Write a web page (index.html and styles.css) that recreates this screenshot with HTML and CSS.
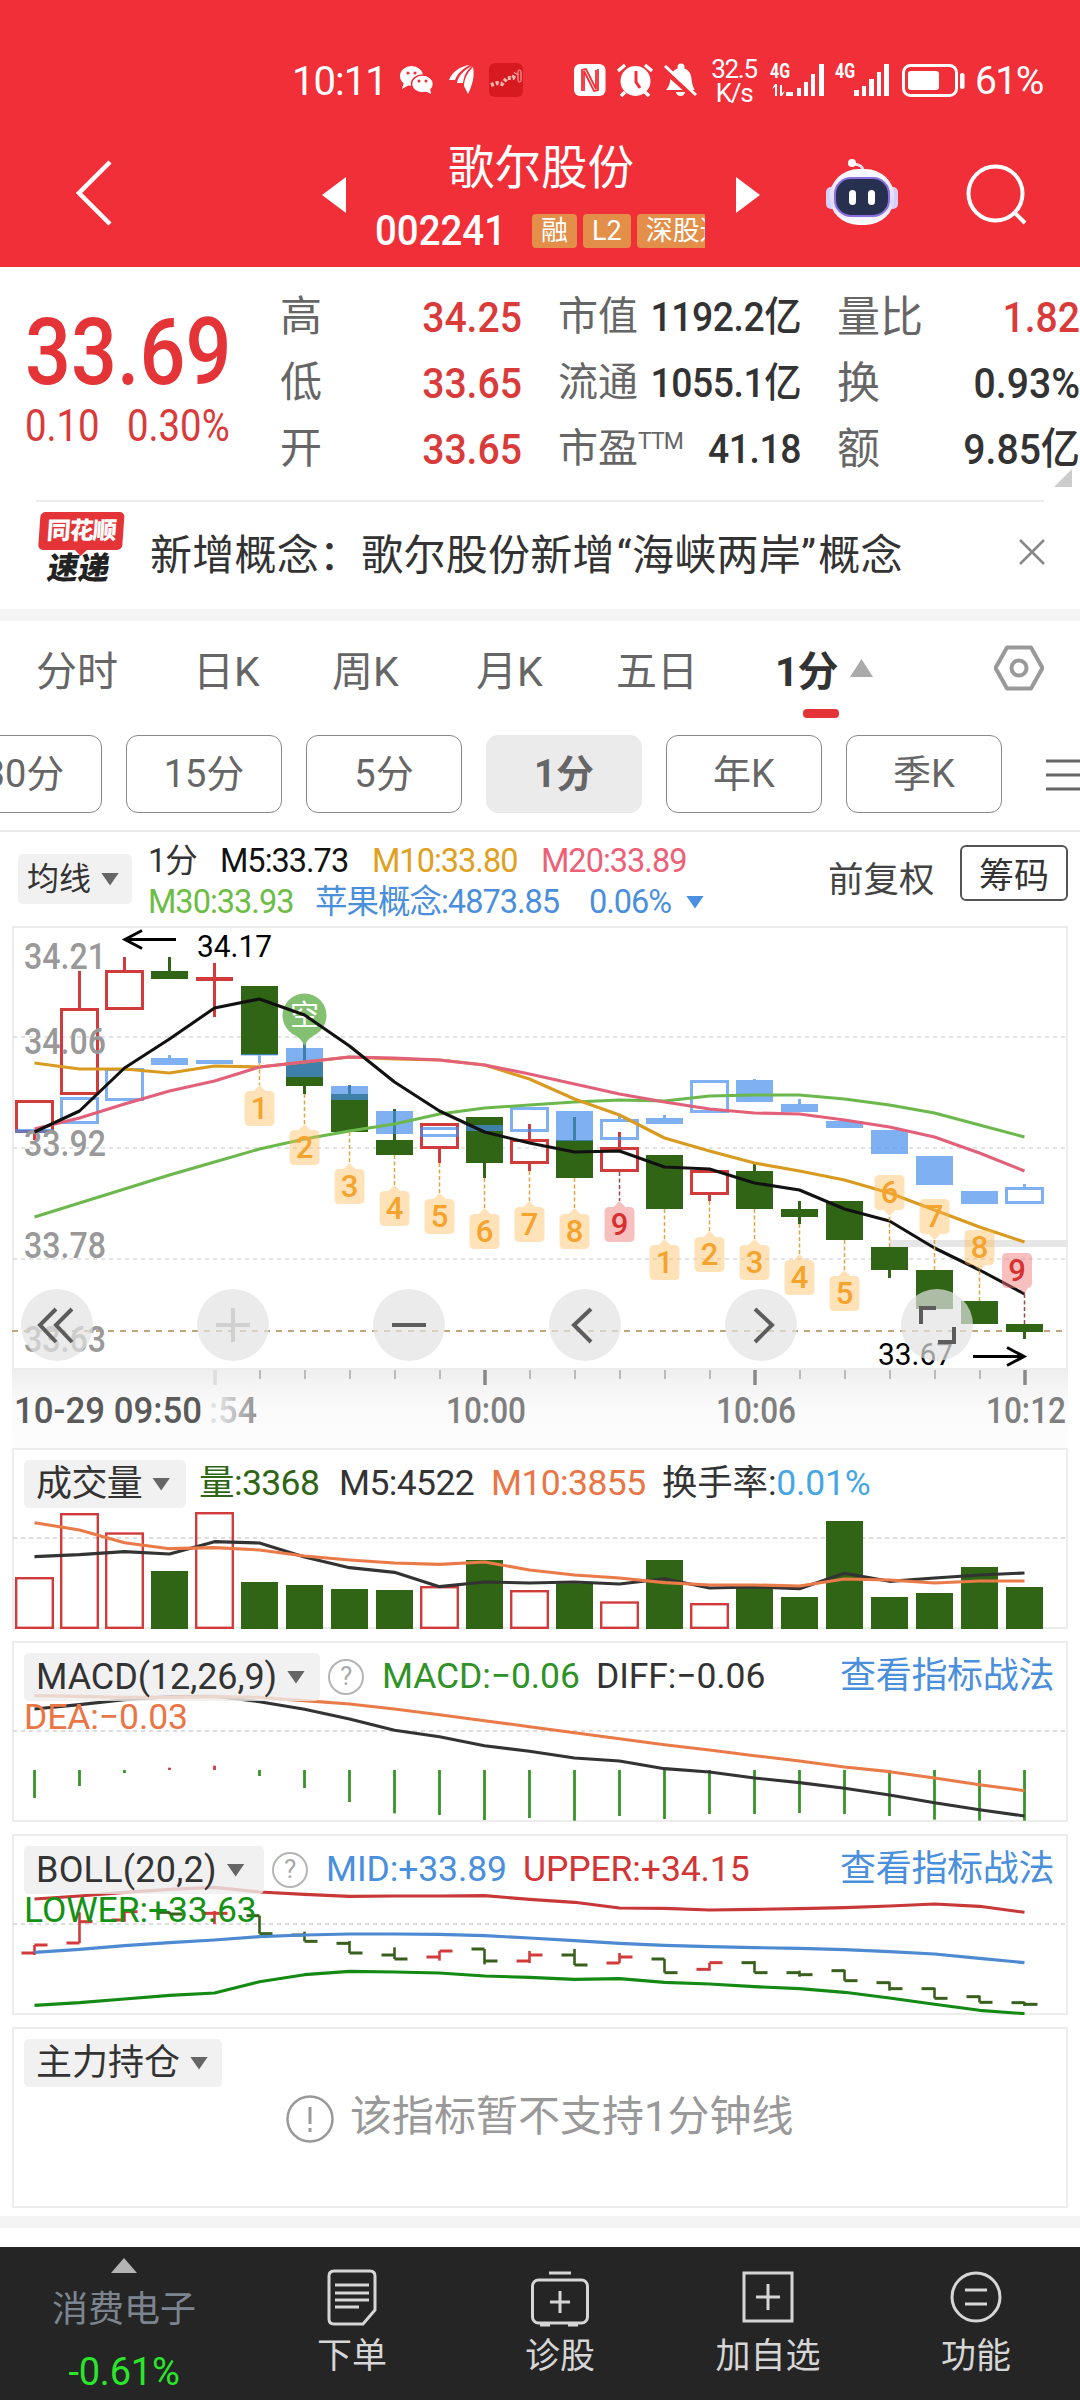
FILE: index.html
```html
<!DOCTYPE html>
<html lang="zh-CN">
<head>
<meta charset="utf-8">
<title>歌尔股份 002241</title>
<link rel="stylesheet" href="styles.css">
</head>
<body>
<header class="top">
  <div class="status">
    <span class="clock">10:11</span>
    <svg class="apps" width="150" height="50" viewBox="385 55 150 50">
      <g fill="#fff"><ellipse cx="411.500" cy="76" rx="11.500" ry="10"/><path d="M404 82l-2 7 7-4z"/>
      <ellipse cx="422.500" cy="84" rx="11" ry="9" stroke="#f12f38" stroke-width="1.500"/><path d="M425 91l6 3-1-6z"/></g>
      <g fill="#f12f38"><circle cx="408" cy="73" r="1.600"/><circle cx="415" cy="73" r="1.600"/><circle cx="419" cy="81" r="1.500"/><circle cx="426" cy="81" r="1.500"/></g>
      <path fill="#fff" d="M449 80c3-8 11-14 21-15-8 4-12 8-15 15zM457 83c1-7 7-13 15-17-6 5-8 10-9 17zM464 86c0-7 4-14 9-19 2 9-1 19-5 27z"/>
      <rect x="489" y="63" width="34" height="34" rx="6" fill="#d71920"/>
      <path d="M491 85l6-2 5 1 5-6 6 0 3-5" fill="none" stroke="#ffb9b0" stroke-width="4" stroke-dasharray="3 2"/><rect x="518" y="70" width="3" height="12" rx="1.500" fill="none" stroke="#ffb9b0"/>
    </svg>
    <svg class="sys" width="132" height="50" viewBox="570 55 132 50">
      <rect x="574" y="64" width="31.500" height="32" rx="6" fill="#fff"/>
      <path d="M582 91V70l4-1 10 20V70M598 69v21l-4 1-10-20v20" fill="none" stroke="#f12f38" stroke-width="1.800"/>
      <circle cx="635.500" cy="81" r="15" fill="#fff"/><path d="M618 71l7-6M652 71l-7-6M625 92l-4 4M645 92l4 4" stroke="#fff" stroke-width="3.500"/>
      <path d="M636 71v11l4 6" fill="none" stroke="#f12f38" stroke-width="3"/>
      <path d="M666 90c4-4 4-9 5-14 1-5 5-8 10-8s9 3 10 8c1 5 1 10 4 14zM676 92h9a4.500 4 0 0 1-9 0z" fill="#fff"/><circle cx="681" cy="67" r="3.500" fill="#fff"/>
      <path d="M664 70l31 28" stroke="#f12f38" stroke-width="5"/><path d="M665 66l31 29" stroke="#fff" stroke-width="3"/>
    </svg>
    <span class="speed">32.5<br>K/s</span>
    <svg class="signal" width="200" height="50" viewBox="768 55 200 50">
      <g fill="#fff">
        <path d="M790 92h3v4h-3zM797 88h4v8h-4zM804 82h4v14h-4zM811 74h4v22h-4zM819 64h5v32h-5z"/>
        <path d="M854 90h5v6h-5zM862 86h4v10h-4zM869 79h5v17h-5zM877 72h4v24h-4zM884 64h5v32h-5z"/>
        <path d="M775 96v-9l-3 2 3-5h2v12zM780 85v11h2l3-5-3 2V85zM786 92h4v4h-4z"/>
        <rect x="908" y="71" width="31" height="19" rx="3"/><rect x="960" y="73" width="4.500" height="16" rx="2"/>
      </g>
      <rect x="903.500" y="65.500" width="53" height="30" rx="7" fill="none" stroke="#fff" stroke-width="3"/>
      <g class="g4"><text x="770" y="78" textLength="20" lengthAdjust="spacingAndGlyphs">4G</text><text x="835" y="78" textLength="20" lengthAdjust="spacingAndGlyphs">4G</text></g>
    </svg>
    <span class="battery">61%</span>
  </div>
  <div class="nav">
    <svg class="back" width="40" height="70" viewBox="0 0 40 70"><path d="M36 4L5 35l31 31" fill="none" stroke="#fff" stroke-width="4.500"/></svg>
    <svg class="prev" width="24" height="36" viewBox="0 0 24 36"><path d="M24 0v36L0 18z" fill="#fff"/></svg>
    <div class="stock">
      <h1>歌尔股份</h1>
      <div class="code"><span class="num">002241</span><div class="marks"><i>融</i><i>L2</i><i>深股通</i></div></div>
    </div>
    <svg class="next" width="24" height="36" viewBox="0 0 24 36"><path d="M0 0v36l24-18z" fill="#fff"/></svg>
    <svg class="robot" width="76" height="72" viewBox="823 158 76 72">
      <defs><linearGradient id="shell" x1="0" y1="0" x2="0" y2="1"><stop offset="0" stop-color="#fff"/><stop offset=".6" stop-color="#ddd8f8"/><stop offset="1" stop-color="#fff"/></linearGradient></defs>
      <path d="M862 172c0-6-3-7-9-8" fill="none" stroke="#f6dbe8" stroke-width="3"/><circle cx="851" cy="163" r="4" fill="#fff"/>
      <rect x="825" y="187" width="11" height="22" rx="5" fill="#d5cff7"/><rect x="886" y="187" width="11" height="22" rx="5" fill="#d5cff7"/>
      <rect x="828.500" y="169" width="65" height="56" rx="29" fill="url(#shell)"/>
      <rect x="834" y="178" width="54" height="38" rx="16" fill="#28304f" stroke="#8b6fe0" stroke-width="2"/>
      <rect x="848" y="190" width="7" height="15" rx="3.500" fill="#fff"/><rect x="867" y="190" width="7" height="15" rx="3.500" fill="#fff"/>
    </svg>
    <svg class="search" width="64" height="64" viewBox="962 163 64 64"><circle cx="994.500" cy="193.500" r="27" fill="none" stroke="#fff" stroke-width="4"/><path d="M1013 212l11 11" stroke="#fff" stroke-width="4"/></svg>
  </div>
</header>

<section class="quote">
  <div class="price">
    <strong class="num">33.69</strong>
    <p class="num"><span>0.10</span><span>0.30%</span></p>
  </div>
  <dl class="c1">
    <dt>高</dt><dd class="up">34.25</dd>
    <dt>低</dt><dd class="up">33.65</dd>
    <dt>开</dt><dd class="up">33.65</dd>
  </dl>
  <dl class="c2">
    <dt>市值</dt><dd>1192.2亿</dd>
    <dt>流通</dt><dd>1055.1亿</dd>
    <dt>市盈<sup>TTM</sup></dt><dd>41.18</dd>
  </dl>
  <dl class="c3">
    <dt>量比</dt><dd class="up">1.82</dd>
    <dt>换</dt><dd>0.93%</dd>
    <dt>额</dt><dd>9.85亿</dd>
  </dl>
  <span class="corner"></span>
</section>

<section class="news">
  <div class="logo"><b>同花顺</b><em>速递</em></div>
  <p>新增概念：歌尔股份新增<q>海峡两岸</q>概念</p>
  <svg width="26" height="26" viewBox="0 0 26 26"><path d="M1 1l24 24M25 1L1 25" stroke="#888" stroke-width="2.500"/></svg>
</section>

<nav class="tabs">
  <span>分时</span><span>日K</span><span>周K</span><span>月K</span><span>五日</span><span class="on">1分</span><i class="tri up"></i>
  <svg width="50" height="46" viewBox="995 645 50 46"><path d="M1008 647.500h24l11.500 20.500-11.500 20.500h-24L996.500 668z" fill="none" stroke="#999" stroke-width="4" stroke-linejoin="round"/><circle cx="1020" cy="668" r="7.500" fill="none" stroke="#999" stroke-width="4"/></svg>
</nav>
<div class="periods">
  <span>30分</span><span>15分</span><span>5分</span><span class="on">1分</span><span>年K</span><span>季K</span>
  <svg width="34" height="32" viewBox="0 0 34 32"><path d="M0 2h34M0 16h34M0 30h34" stroke="#666" stroke-width="3"/></svg>
</div>

<section class="ma">
  <div class="pick">均线<i class="tri"></i></div>
  <div class="values">
    <p><span class="w0">1分</span><span class="w1">M5:33.73</span><span class="w2 gold">M10:33.80</span><span class="rose">M20:33.89</span></p>
    <p><span class="w3 lime">M30:33.93</span><span class="w4 blue">苹果概念:4873.85</span><span class="w5 blue">0.06%</span><i class="tri bl"></i></p>
  </div>
  <span class="adjust">前复权</span>
  <button>筹码</button>
</section>

<section class="kline"><svg id="k" width="1056" height="444" viewBox="12 926 1056 444"></svg></section>
<section class="axis"><svg id="axis" width="1056" height="78" viewBox="12 1370 1056 78"></svg></section>

<section class="panel">
  <svg id="vol" width="1056" height="181" viewBox="12 1448 1056 181"></svg>
  <div class="head vol"><div class="pick">成交量<i class="tri"></i></div><span class="green">量:3368</span><span>M5:4522</span><span class="orange">M10:3855</span><span>换手率:<span class="sky">0.01%</span></span></div>
</section>
<section class="panel">
  <svg id="macd" width="1056" height="181" viewBox="12 1641 1056 181"></svg>
  <div class="head macd"><div class="pick">MACD(12,26,9)<i class="tri"></i></div><i class="help">?</i><span class="leaf">MACD:−0.06</span><span>DIFF:−0.06</span><a>查看指标战法</a></div>
  <div class="second orange">DEA:−0.03</div>
</section>
<section class="panel">
  <svg id="boll" width="1056" height="181" viewBox="12 1834 1056 181"></svg>
  <div class="head boll"><div class="pick">BOLL(20,2)<i class="tri"></i></div><i class="help">?</i><span class="blue">MID:+33.89</span><span class="red">UPPER:+34.15</span><a>查看指标战法</a></div>
  <div class="second grass">LOWER:+33.63</div>
</section>
<section class="panel last">
  <div class="head"><div class="pick">主力持仓<i class="tri"></i></div></div>
  <div class="empty"><svg width="48" height="48" viewBox="0 0 48 48"><circle cx="24" cy="24" r="22.500" fill="none" stroke="#999" stroke-width="2.500"/><path d="M24 12v17M24 33v4" stroke="#999" stroke-width="3"/></svg><span>该指标暂不支持1分钟线</span></div>
</section>
<div class="band"></div>

<footer>
  <div class="sector"><i></i><span>消费电子</span><b>-0.61%</b></div>
  <div><svg width="60" height="60" viewBox="0 0 60 60"><path d="M12 3h36q5 0 5 5v34L41 56H12q-5 0-5-5V8q0-5 5-5z"/><path d="M13 17h34M13 25h34M13 32h34M13 39h24"/></svg>下单</div>
  <div><svg width="60" height="60" viewBox="0 0 60 60"><rect x="2.500" y="12" width="55" height="43" rx="6"/><path d="M19 5h22M30 23v22M20 34h20M10 57h10M38 57h10"/></svg>诊股</div>
  <div><svg width="60" height="60" viewBox="0 0 60 60"><path d="M6 5h48v48H6zM30 16v26M18 29h24"/></svg>加自选</div>
  <div><svg width="60" height="60" viewBox="0 0 60 60"><circle cx="30" cy="29" r="24"/><path d="M19 22h22M19 36h22"/></svg>功能</div>
</footer>
<script src="chart.js"></script>
</body>
</html>
```
FILE: styles.css
```css
* { box-sizing: border-box; margin: 0; padding: 0; }
html { background: #fff; }
body { width: 1080px; height: 2400px; overflow: hidden; background: #fff; color: #333; display: flex; flex-direction: column; font-family: Roboto, "Noto Sans CJK SC", sans-serif; }
i, em { font-style: normal; }
svg { display: block; flex: none; }
span, p, dt, dd, b, strong { white-space: nowrap; }
.num { font-family: Roboto, sans-serif; }

.top { height: 267px; background: #f12f38; color: #fff; flex: none; }
.status { height: 130px; padding: 30px 37px 0 292px; display: flex; align-items: center; }
.clock { font-size: 40px; width: 93px; letter-spacing: -1px; padding-top: 2px; }
.apps { width: 150px; }
.sys { margin-left: 35px; }
.speed { width: 48px; margin-left: 8px; font-size: 26px; line-height: 24px; text-align: center; letter-spacing: -1.300px; padding-top: 1px; }
.signal { margin-left: 10px; }
.g4 { fill: #fff; font-size: 20px; font-weight: 700; }
.battery { font-size: 39px; letter-spacing: -1.600px; margin-left: 7px; padding-top: 2px; }
.nav { height: 137px; display: flex; align-items: flex-start; }
.back { margin: 28px 0 0 74px; }
.prev { margin: 47px 0 0 208px; }
.stock { width: 342px; margin: 10px 24px 0; color: #fff; }
h1 { font-size: 46.500px; font-weight: 400; line-height: 57px; text-align: center; }
.code { display: flex; align-items: center; height: 68px; padding-left: 5px; line-height: 1; }
.code .num { font-size: 42px; font-weight: 500; width: 157px; transform: scaleX(.915); transform-origin: left; }
.marks { display: flex; gap: 6px; width: 173px; overflow: hidden; }
.marks i { flex: none; height: 34px; line-height: 34px; padding: 0 9px; border-radius: 4px; background: #e38f4a; font-size: 27px; white-space: nowrap; }
.next { margin-top: 47px; }
.robot { margin: 28px 0 0 64px; }
.search { margin: 33px 0 0 63px; }

.quote { height: 235px; display: flex; position: relative; flex: none; }
.quote::after { content: ""; position: absolute; left: 36px; right: 36px; bottom: 0; height: 2px; background: #ececec; }
.price { width: 280px; padding: 40px 0 0 25px; color: #e43437; flex: none; }
.price strong { display: block; font-size: 92px; line-height: 92px; font-weight: 500; transform: scaleX(.88); transform-origin: left; }
.price p { display: flex; font-size: 43.500px; line-height: 50px; margin-top: 3px; color: #d93a3a; }
.price p span { transform: scaleX(.88); transform-origin: left; }
.price p span:first-child { width: 102px; }
dl { display: grid; grid-template-columns: auto 1fr; grid-auto-rows: 66px; line-height: 66px; padding-top: 17px; height: 213px; flex: none; }
dt { font-size: 42px; color: #666; }
dd { font-size: 43px; text-align: right; font-weight: 500; color: #333; transform: scaleX(.91); transform-origin: right; }
.up { color: #d93a3a; }
.c1 { width: 242px; }
.c2 { width: 243px; margin-left: 36px; grid-template-columns: 60px 183px; }
.c2 dt { font-size: 40px; }
.c2 dd { font-size: 41px; letter-spacing: -.500px; }
.c3 { width: 243px; margin-left: 36px; }
.c3 dt { font-size: 43px; }
sup { font-size: 23px; vertical-align: 13px; line-height: 0; letter-spacing: -1px; }
.corner { position: absolute; right: 8px; bottom: 15px; border: 9px solid transparent; border-right-color: #ccc; border-bottom-color: #ccc; }

.news { height: 119px; flex: none; display: flex; align-items: center; padding: 0 35px 11px 36px; border-bottom: 12px solid #f4f4f4; }
.logo { flex: none; width: 88px; height: 76px; display: flex; flex-direction: column; align-items: center; transform: skewX(-4deg); line-height: 1; }
.logo b { width: 84px; height: 39px; border-radius: 5px; background: #e43437; color: #fff; font-size: 24px; line-height: 38px; text-align: center; font-weight: 900; letter-spacing: -1px; position: relative; }
.logo b::after { content: ""; position: absolute; left: 37px; top: 38px; border: 6px solid transparent; border-top-color: #e43437; border-bottom: 0; }
.logo em { font-size: 31px; font-weight: 900; color: #222; transform: skewX(-6deg); line-height: 38px; }
.news p { flex: none; font-size: 42px; width: 895px; padding: 3px 0 0 26px; letter-spacing: .250px; }
.news svg { margin-top: 3px; }
q { quotes: none; }
q::before { content: "“"; font-family: Roboto, sans-serif; margin-left: 2px; }
q::after { content: "”"; font-family: Roboto, sans-serif; margin-right: 2px; }

.tabs { height: 96px; flex: none; display: grid; grid-template-columns: 157px 139px 144px 140px 159px 75px 144px 50px; padding: 0 0 2px 36px; align-items: center; font-size: 41px; color: #666; }
.tabs .on { color: #333; font-weight: 700; position: relative; letter-spacing: -1px; }
.tabs .on::after { content: ""; position: absolute; left: 28px; bottom: -20px; width: 36px; height: 9px; border-radius: 4px; background: #e43437; }
.tri { display: inline-block; width: 18px; height: 13px; background: #666; clip-path: polygon(0 0, 100% 0, 50% 100%); }
.tri.up { width: 23px; height: 18px; background: #aaa; clip-path: polygon(50% 0, 100% 100%, 0 100%); }
.tri.bl { background: #4a90e2; }
.periods { height: 115px; flex: none; border-bottom: 2px solid #e9e9e9; padding-top: 18px; display: flex; gap: 24px; margin-left: -54px; color: #666; }
.periods span { flex: none; width: 156px; height: 78px; border: 1.500px solid #888; border-radius: 12px; font-size: 38px; line-height: 77px; text-align: center; }
.periods span.on { background: #ebebeb; border-color: #ebebeb; font-weight: 700; }
.periods svg { margin: 24px 0 0 20px; }

.ma { height: 94px; flex: none; display: flex; align-items: center; padding: 0 12px 0 18px; }
.pick { height: 48px; border-radius: 5px; background: rgba(238,238,238,.8); display: flex; align-items: center; gap: 10px; padding-left: 12px; font-size: 36px; line-height: 44px; white-space: nowrap; }
.ma .pick { width: 114px; height: 50px; font-size: 32px; padding-left: 9px; }
.values { width: 680px; padding: 5px 0 0 16px; font-size: 32.500px; line-height: 41px; letter-spacing: -1px; }
.values p { display: flex; align-items: center; }
.values span { flex: none; color: #111; }
.values .w0 { width: 72px; color: #333; }
.w1 { width: 152px; } .w2 { width: 169px; } .w3 { width: 167px; } .w4 { width: 274px; } .w5 { width: 97px; }
.values .gold { color: #e0a020; } .values .rose { color: #ee6076; } .values .lime { color: #6cbd45; }
.blue, .values .blue { color: #4a8fdb; }
.adjust { font-size: 35.500px; width: 148px; padding-left: 16px; color: #444; margin-top: -5px; }
.ma button { width: 108px; height: 56px; border: 2px solid #555; border-radius: 6px; background: #fff; color: #333; font: 35px "Noto Sans CJK SC", sans-serif; line-height: 50px; margin-top: -12px; }

.kline { height: 444px; margin: 0 12px; flex: none; }
.axis { height: 78px; margin: 0 12px; flex: none; background: linear-gradient(#efefef, #fbfbfb 50%, #fcfcfc); }
.panel { margin: 0 12px 12px; height: 181px; flex: none; display: grid; grid-template-rows: 60px 121px; }
.panel > svg { grid-area: 1 / 1 / 3 / 2; }
.head { grid-area: 1 / 1; height: 48px; margin: 12px 0 0 12px; display: grid; align-items: center; font-size: 35.500px; line-height: 44px; letter-spacing: -.100px; }
.head > span, .head > a { margin-top: -3px; }
.vol { grid-template-columns: 175px 140px 152px 171px 1fr; letter-spacing: -.600px; }
.vol > span:last-child { letter-spacing: -.200px; }
.vol .pick { width: 162px; }
.macd { grid-template-columns: 304px 54px 214px 245px 1fr; }
.macd .pick { width: 296px; }
.boll { grid-template-columns: 248px 54px 197px 318px 1fr; }
.boll .pick { width: 240px; letter-spacing: .200px; }
.head a { font-size: 36px; letter-spacing: -.300px; color: #4a8fdb; white-space: nowrap; margin-left: -1px; }
.help { width: 36px; height: 36px; border: 2.500px solid #b5b5b5; border-radius: 50%; font-size: 26px; line-height: 31px; text-align: center; color: #aaa; }
.second { grid-area: 2 / 1; font-size: 35.500px; height: 32px; line-height: 32px; padding-left: 12px; letter-spacing: -.100px; }
.green { color: #2f6514; } .leaf { color: #2f9226; } .grass { color: #149214; } .orange { color: #ea7545; } .sky { color: #45a6e6; } .red { color: #d23535; }
.last { border: 2px solid #ececec; margin-bottom: 8px; }
.last .head { margin: 10px 0 0 10px; }
.last .pick { width: 198px; letter-spacing: 0; }
.empty { display: flex; align-items: center; gap: 16px; padding-left: 272px; height: 60px; font-size: 42px; line-height: 50px; color: #999; }
.empty span { margin-top: -5px; }
.band { height: 12px; background: #f4f4f4; flex: none; margin-bottom: 19px; }

footer { height: 153px; flex: none; background: #252525; color: #d6d6d6; display: grid; grid-template-columns: 248px 208px 208px 208px 208px; font-size: 35px; text-align: center; }
footer > div { display: flex; flex-direction: column; align-items: center; padding-top: 21px; line-height: 48px; gap: 5px; }
footer svg { fill: none; stroke: #d6d6d6; stroke-width: 3; }
footer .sector { padding-top: 11px; gap: 0; color: #7c858f; font-size: 36px; }
.sector i { width: 26px; height: 15px; background: #b4b4b4; clip-path: polygon(50% 0, 100% 100%, 0 100%); }
.sector span { line-height: 74px; }
.sector b { font-weight: 400; color: #2be62b; font-size: 38px; line-height: 50px; letter-spacing: -.200px; }

svg text { font-family: Roboto, "Noto Sans CJK SC", sans-serif; }
.ylab { font-size: 36px; fill: #999; font-weight: 500; }
.peak { font-size: 31px; fill: #000; }
.tagn { font-size: 31px; font-weight: 500; text-anchor: middle; }
.tick { font-size: 36px; fill: #7f7f7f; font-weight: 500; }
.strong { fill: #5a5a5a; }
```
FILE: chart.js
```js
const X = i => 34.5 + 45 * i;
const RED = '#d23b3b', GREEN = '#2f6514', BLUE = 'rgba(69,141,235,.69)';
const rect = (x, y, w, h, fill) => `<rect x="${x}" y="${y}" width="${w}" height="${h}" fill="${fill}"/>`;
const box = (x, y, w, h, c, s) => `<rect x="${x + s / 2}" y="${y + s / 2}" width="${w - s}" height="${h - s}" fill="none" stroke="${c}" stroke-width="${s}"/>`;
const seg = (x1, y1, x2, y2, c, s, extra = '') => `<path d="M${x1} ${y1}L${x2} ${y2}" stroke="${c}" stroke-width="${s}" fill="none" ${extra}/>`;
const line = (ys, c, f = y => y, s = 3.1) => `<path d="M${ys.map((y, i) => X(i) + ' ' + f(y)).join('L')}" fill="none" stroke="${c}" stroke-width="${s}" stroke-linejoin="round"/>`;
const label = (x, y, w, t, cls, extra = '') => `<text x="${x}" y="${y}" textLength="${w}" lengthAdjust="spacingAndGlyphs" class="${cls}" ${extra}>${t}</text>`;
const frame = (y, h) => box(12, y, 1056, h, '#ececec', 2);
const dots = (y, c = '#e3e3e3') => seg(13, y, 1067, y, c, 2, 'stroke-dasharray="4 4"');
const put = (id, s) => { document.getElementById(id).innerHTML = s; };

// type, body top, body bottom, wick top, wick bottom
const candles = [
  ['r',1100,1133,1100,1140],['r',1008,1095,971,1095],['r',970,1010,957,1010],['g',971,979,957,979],['x',977,981,963,1017],
  ['g',986,1055,986,1055],['g',1062,1086,1043,1094],['g',1094,1132,1085,1132],['g',1140,1155,1109,1155],['r',1123,1149,1123,1163],
  ['g',1117,1163,1117,1178],['r',1139,1164,1124,1171],['g',1140,1178,1117,1178],['r',1147,1172,1132,1172],['g',1155,1209,1155,1209],
  ['r',1170,1195,1170,1201],['g',1171,1209,1164,1209],['g',1209,1217,1201,1224],['g',1201,1240,1201,1240],['g',1247,1270,1247,1278],
  ['g',1270,1309,1270,1309],['g',1301,1324,1301,1324],['g',1324,1332,1324,1339]];
const sector = [
  ['h',1129,1133],['h',1097,1124],['h',1068,1101],['f',1058,1065,1055],['f',1060,1064],['f',1054,1055.5,1054,1063],['f',1048,1077,1043],
  ['f',1086,1100,1085],['f',1111,1134],['h',1127,1137],['f',1125,1131],['h',1107,1132],['f',1111,1141],['h',1119,1140,1114],
  ['f',1118,1124,1115],['h',1080,1113],['f',1080,1102,1079],['f',1104,1112,1099],['f',1121,1128],['f',1130,1154],['f',1156,1185],
  ['f',1191,1204],['h',1187,1204,1184]];
let s = frame(926, 444) + dots(1037) + dots(1148) + dots(1259);
s += rect(889.5, 1240, 178, 7, '#e6e6e6');
s += seg(12, 1331, 1065, 1331, '#bfa57a', 2, 'stroke-dasharray="6 6"');
candles.forEach(([t, a, b, h, l], i) => {
  const c = t === 'g' ? GREEN : RED;
  if (h < a) s += rect(X(i) - 1.5, h, 3, a - h, c);
  if (l > b) s += rect(X(i) - 1.5, b, 3, l - b, c);
  s += t === 'r' ? box(X(i) - 19.5, a, 39, b - a, c, 3) : rect(X(i) - 18.5, a, 37, b - a, c);
});
sector.forEach(([t, a, b, h, l], i) => {
  if (h < a) s += rect(X(i) - 1.5, h, 3, a - h, BLUE);
  if (l > b) s += rect(X(i) - 1.5, b, 3, l - b, BLUE);
  s += t === 'h' ? box(X(i) - 19.5, a, 39, b - a, BLUE, 3) : rect(X(i) - 18.5, a, 37, b - a, BLUE);
});
[['34.21',969],['34.06',1054],['33.92',1156],['33.78',1258],['33.63',1352]].forEach(([t, y]) => { s += label(24, y, 82, t, 'ylab'); });
s += `<path d="M304.500 1046q-3-8-12-12a22 22 0 1 1 24 0q-9 4-12 12z" fill="#83c072"/><text x="304.500" y="1026" text-anchor="middle" font-size="29" fill="#fff">空</text>`;
s += line([1217,1203,1189,1175,1162,1149,1139,1131,1124,1114,1108,1105,1102,1100,1101,1096,1095,1095,1099,1105,1113,1125,1137], '#6cb84c');
s += line([1063,1069,1069,1073,1066,1067,1062,1057,1059,1060,1065,1079,1099,1115,1138,1151,1163,1171,1180,1193,1210,1227,1242], '#d99a20');
s += line([1129,1118,1104,1091,1081,1067,1062,1057,1058,1060,1065,1074,1084,1094,1102,1109,1113,1114,1120,1127,1137,1153,1171], '#e2607a');
s += line([1132,1111,1068,1039,1008,999,1015,1046,1082,1111,1132,1143,1152,1151,1167,1169,1183,1190,1209,1221,1248,1270,1294], '#111');
// TD sequence tags: candle index, number, tip y, drawn above the candle
const tags = [[5,1,1085],[6,2,1124],[7,3,1163],[8,4,1185],[9,5,1193],[10,6,1208],[11,7,1201],[12,8,1208],[13,9,1201],
  [14,1,1239],[15,2,1231],[16,3,1239],[17,4,1254],[18,5,1270],[19,6,1216,1],[20,7,1240,1],[21,8,1271,1],[22,9,1294,1]];
tags.forEach(([i, n, tip, top]) => {
  const x = X(i), red = n === 9, bx = i === 22 ? 1002 : x - 15, by = top ? tip - 41 : tip + 6;
  const from = i === 5 ? 1063 : top ? candles[i][1] : candles[i][4];
  s += seg(x, from, x, tip, red ? '#a04545' : '#dda640', 1.5, 'stroke-dasharray="4 2.5"');
  const fill = red ? 'rgba(240,120,120,.47)' : 'rgba(255,185,85,.42)';
  const e = by + 35;
  s += `<path d="M${bx + 5} ${by}${top ? '' : `H${x - 6}L${x} ${tip}L${x + 6} ${by}`}H${bx + 25}q5 0 5 5v25q0 5-5 5${top ? `H${Math.min(x + 6, bx + 26)}L${x} ${tip}L${x - 6} ${e}` : ''}H${bx + 5}q-5 0-5-5v-25q0-5 5-5z" fill="${fill}"/>`;
  s += `<text x="${bx + 15}" y="${by + 28}" class="tagn" fill="${red ? '#d83030' : '#f5a32c'}">${n}</text>`;
});
s += label(197, 957, 75, '34.17', 'peak') + label(878, 1365, 75, '33.67', 'peak');
s += '<path d="M176 939.500H125M142 930.500l-17 9 17 9M973 1356.500h51M1007 1347.500l17 9-17 9" fill="none" stroke="#000" stroke-width="3"/>';
[57, 233, 409, 585, 761, 937].forEach(x => { s += `<circle cx="${x}" cy="1325" r="36" fill="rgba(227,227,227,.7)"/>`; });
s += '<g fill="none" stroke="#5c5c5c" stroke-width="4"><path d="M56 1309l-16 16 16 17M72 1309l-16 16 16 17M392 1325h34M591 1309l-17 16 17 17M755 1309l17 16-17 17M921 1324v-16h15M954 1327v15h-16"/></g><path d="M233 1308v34M216 1325h34" stroke="#d0d0d0" stroke-width="4"/>';
put('k', s);

s = '';
for (let i = 4; i <= 22; i++) {
  const big = i % 6 === 4;
  s += seg(X(i) + .5, 1370, X(i) + .5, big ? 1385 : 1379, i === 4 ? '#ddd' : big ? '#888' : '#bbb', big ? 3.5 : 2);
}
s += '<defs><linearGradient id="fade"><stop offset="0" stop-color="#e4e4e4"/><stop offset=".3" stop-color="#d8d8d8"/><stop offset="1" stop-color="#909090"/></linearGradient></defs>';
s += label(14, 1423, 188, '10-29 09:50', 'tick strong') + label(209, 1423, 48, ':54', 'tick', 'style="fill:url(#fade)"');
s += label(446, 1423, 80, '10:00', 'tick') + label(716, 1423, 80, '10:06', 'tick') + label(986, 1423, 80, '10:12', 'tick');
put('axis', s);

const v = y => 1440 + y / 3;
s = frame(1448, 181) + dots(1538, '#ddd');
[-411,-219,-277,393,-216,426,435,447,450,-438,360,-450,430,-484,360,-489,441,471,243,471,459,381,441].forEach((y, i) => {
  s += y < 0 ? box(X(i) - 19.5, v(-y), 39, 1629 - v(-y), RED, 2.4) : rect(X(i) - 18.5, v(y), 37, 1629 - v(y), GREEN);
});
s += line([350,344,335,342,305,309,351,383,397,440,426,429,426,432,416,444,441,446,400,424,414,405,399], '#333', v);
s += line([248,270,308,326,323,330,348,360,369,373,366,390,405,414,428,435,435,438,417,420,429,423,423], '#ea7a48', v);
put('vol', s);

const m = y => 1635 + y / 3;
s = frame(1641, 181) + dots(1731, '#ddd');
[489,453,414,398,392,423,459,501,535,540,555,549,557,543,552,537,537,534,537,543,554,557,557].forEach((y, i) => {
  s += seg(X(i), 1770, X(i), m(y), y < 405 ? RED : '#38942a', 2.8);
});
s += line([222,209,194,185,184,200,223,252,286,305,332,349,369,378,401,411,429,443,460,480,503,524,543], '#333', m);
s += line([182,184,187,187,185,187,197,207,222,239,257,275,293,311,329,345,362,378,396,410,429,449,467], '#ea7a48', m);
put('macd', s);

const b = y => 1825 + y / 3;
s = frame(1834, 181) + dots(1924, '#ddd');
// open, close, high, low
[[384,360,360,390],[354,290,262,354],[285,260,258,290],[262,267,260,268],[265,265,258,297],[272,326,272,326],[330,349,320,349],[355,384,348,384],
 [390,402,367,402],[396,378,378,407],[372,408,372,418],[408,390,378,414],[390,420,372,420],[414,396,384,414],[402,443,402,443],[433,413,413,437],
 [413,443,408,443],[443,449,437,455],[437,467,434,467],[473,491,470,497],[491,520,488,520],[515,532,512,532],[533,538,531,543]].forEach(([o, c, h, l], i) => {
  const k = [0, 1, 2, 4, 9, 11, 13, 15].includes(i) ? RED : '#38601c';
  s += seg(X(i), b(h), X(i), b(l), k, 2.6) + seg(X(i) - 13, b(o), X(i), b(o), k, 3) + seg(X(i), b(c), X(i) + 13, b(c), k, 3);
});
s += line([222,213,202,193,187,201,208,214,213,213,212,223,232,249,250,255,253,251,248,243,237,244,262], '#c93838', b);
s += line([382,373,362,353,345,335,330,327,327,328,332,339,347,355,361,365,368,370,374,380,387,400,413], '#4d8ad2', b);
s += line([541,533,522,511,504,470,449,439,441,444,453,457,463,461,472,477,485,491,502,519,538,556,566], '#148a14', b);
put('boll', s);
```
